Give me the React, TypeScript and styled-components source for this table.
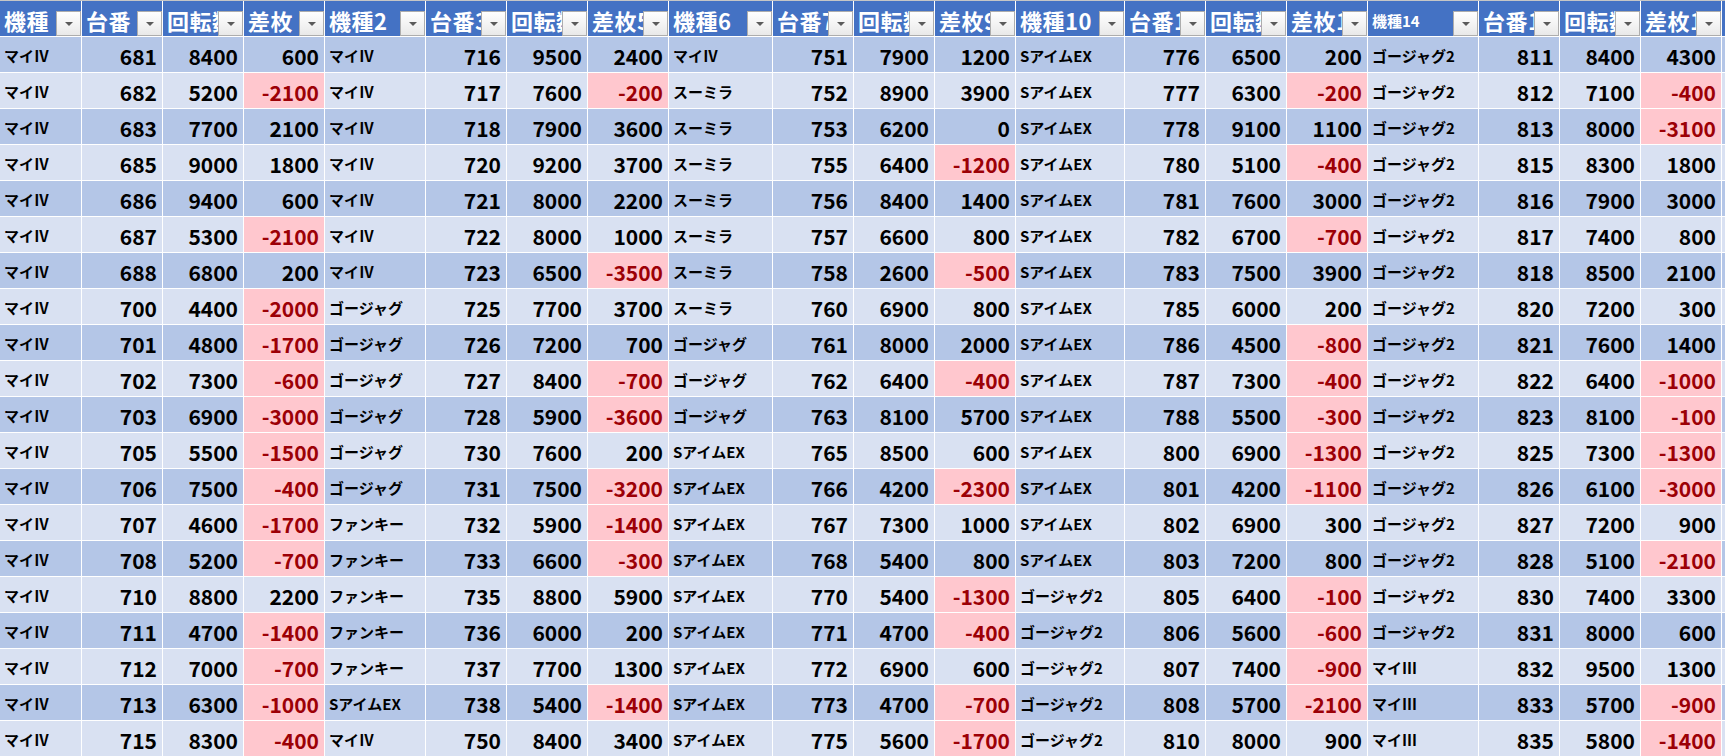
import styled, { createGlobalStyle } from 'styled-components'

// 列幅（Excel の列幅をピクセルで）
const COLS =
  '81px 80px 80px 80px 100px 80px 80px 80px 103px 80px 80px 80px 108px 80px 80px 80px 110px 80px 80px 80px 80px'

const GlobalStyle = createGlobalStyle`
  html, body {
    margin: 0;
    padding: 0;
    background: #ffffff;
  }
  body {
    font-family: 'Noto Sans CJK JP', 'Noto Sans', sans-serif;
  }
`

const Sheet = styled.div`
  width: 1725px;
  height: 756px;
  overflow: hidden;
  background: #ffffff;
  border-top: 1px solid #c6c6c6;
  box-sizing: border-box;
`

const Row = styled.div<{ $header?: boolean }>`
  display: grid;
  grid-template-columns: ${COLS};
  column-gap: 1px;
  height: ${props => (props.$header ? '35px' : '35px')};
  margin-bottom: 1px;
  width: max-content;
`

const HeaderCell = styled.div<{ $small?: boolean }>`
  position: relative;
  overflow: hidden;
  display: flex;
  align-items: center;
  padding: 3px 0 0 4px;
  box-sizing: border-box;
  background: #4472c4;
  color: #ffffff;
  font-size: ${props => (props.$small ? '15px' : '22px')};
  font-weight: 700;
  white-space: nowrap;
  letter-spacing: ${props => (props.$small ? '0' : '0.5px')};
`

const FilterButton = styled.span`
  position: absolute;
  right: 0;
  bottom: 0;
  width: 25px;
  height: 25px;
  box-sizing: border-box;
  border: 1px solid #adadad;
  background: linear-gradient(#ffffff, #e9e9e9);
  display: flex;
  align-items: center;
  justify-content: center;
  &::after {
    content: '';
    border-left: 4px solid transparent;
    border-right: 4px solid transparent;
    border-top: 4px solid #5a5a5a;
  }
`

const Cell = styled.div<{ $dark: boolean; $num?: boolean; $neg?: boolean }>`
  display: flex;
  align-items: center;
  justify-content: ${props => (props.$num ? 'flex-end' : 'flex-start')};
  padding: ${props => (props.$num ? '2px 5px 0 0' : '1px 0 0 4px')};
  box-sizing: border-box;
  overflow: hidden;
  white-space: nowrap;
  background: ${props =>
    props.$neg ? '#ffc7ce' : props.$dark ? '#b4c6e7' : '#d9e1f2'};
  color: ${props => (props.$neg ? '#9c0006' : '#000000')};
  font-size: ${props => (props.$num ? '21px' : '15px')};
  font-weight: 700;
`

const headers = [
  '機種', '台番', '回転数', '差枚',
  '機種2', '台番3', '回転数4', '差枚5',
  '機種6', '台番7', '回転数8', '差枚9',
  '機種10', '台番11', '回転数12', '差枚13',
  '機種14', '台番15', '回転数16', '差枚17',
  '機種18'
]

type Group = [string, number, number, number]

const M4 = 'マイⅣ'
const M3 = 'マイⅢ'
const GJ = 'ゴージャグ'
const GJ2 = 'ゴージャグ2'
const SM = 'スーミラ'
const SA = 'SアイムEX'
const FK = 'ファンキー'

const rows: Group[][] = [
  [[M4, 681, 8400, 600], [M4, 716, 9500, 2400], [M4, 751, 7900, 1200], [SA, 776, 6500, 200], [GJ2, 811, 8400, 4300]],
  [[M4, 682, 5200, -2100], [M4, 717, 7600, -200], [SM, 752, 8900, 3900], [SA, 777, 6300, -200], [GJ2, 812, 7100, -400]],
  [[M4, 683, 7700, 2100], [M4, 718, 7900, 3600], [SM, 753, 6200, 0], [SA, 778, 9100, 1100], [GJ2, 813, 8000, -3100]],
  [[M4, 685, 9000, 1800], [M4, 720, 9200, 3700], [SM, 755, 6400, -1200], [SA, 780, 5100, -400], [GJ2, 815, 8300, 1800]],
  [[M4, 686, 9400, 600], [M4, 721, 8000, 2200], [SM, 756, 8400, 1400], [SA, 781, 7600, 3000], [GJ2, 816, 7900, 3000]],
  [[M4, 687, 5300, -2100], [M4, 722, 8000, 1000], [SM, 757, 6600, 800], [SA, 782, 6700, -700], [GJ2, 817, 7400, 800]],
  [[M4, 688, 6800, 200], [M4, 723, 6500, -3500], [SM, 758, 2600, -500], [SA, 783, 7500, 3900], [GJ2, 818, 8500, 2100]],
  [[M4, 700, 4400, -2000], [GJ, 725, 7700, 3700], [SM, 760, 6900, 800], [SA, 785, 6000, 200], [GJ2, 820, 7200, 300]],
  [[M4, 701, 4800, -1700], [GJ, 726, 7200, 700], [GJ, 761, 8000, 2000], [SA, 786, 4500, -800], [GJ2, 821, 7600, 1400]],
  [[M4, 702, 7300, -600], [GJ, 727, 8400, -700], [GJ, 762, 6400, -400], [SA, 787, 7300, -400], [GJ2, 822, 6400, -1000]],
  [[M4, 703, 6900, -3000], [GJ, 728, 5900, -3600], [GJ, 763, 8100, 5700], [SA, 788, 5500, -300], [GJ2, 823, 8100, -100]],
  [[M4, 705, 5500, -1500], [GJ, 730, 7600, 200], [SA, 765, 8500, 600], [SA, 800, 6900, -1300], [GJ2, 825, 7300, -1300]],
  [[M4, 706, 7500, -400], [GJ, 731, 7500, -3200], [SA, 766, 4200, -2300], [SA, 801, 4200, -1100], [GJ2, 826, 6100, -3000]],
  [[M4, 707, 4600, -1700], [FK, 732, 5900, -1400], [SA, 767, 7300, 1000], [SA, 802, 6900, 300], [GJ2, 827, 7200, 900]],
  [[M4, 708, 5200, -700], [FK, 733, 6600, -300], [SA, 768, 5400, 800], [SA, 803, 7200, 800], [GJ2, 828, 5100, -2100]],
  [[M4, 710, 8800, 2200], [FK, 735, 8800, 5900], [SA, 770, 5400, -1300], [GJ2, 805, 6400, -100], [GJ2, 830, 7400, 3300]],
  [[M4, 711, 4700, -1400], [FK, 736, 6000, 200], [SA, 771, 4700, -400], [GJ2, 806, 5600, -600], [GJ2, 831, 8000, 600]],
  [[M4, 712, 7000, -700], [FK, 737, 7700, 1300], [SA, 772, 6900, 600], [GJ2, 807, 7400, -900], [M3, 832, 9500, 1300]],
  [[M4, 713, 6300, -1000], [SA, 738, 5400, -1400], [SA, 773, 4700, -700], [GJ2, 808, 5700, -2100], [M3, 833, 5700, -900]],
  [[M4, 715, 8300, -400], [M4, 750, 8400, 3400], [SA, 775, 5600, -1700], [GJ2, 810, 8000, 900], [M3, 835, 5800, -1400]]
]

const App = () => {
  return (
    <>
      <GlobalStyle />
      <Sheet>
        <Row $header>
          {headers.map(h => (
            <HeaderCell key={h} $small={h === '機種14'}>
              {h}
              <FilterButton />
            </HeaderCell>
          ))}
        </Row>
        {rows.map((groups, i) => {
          // 縞模様：奇数行が濃い色
          const dark = i % 2 === 0
          return (
            <Row key={i}>
              {groups.map(([name, no, spins, diff], g) => [
                <Cell key={`${g}-n`} $dark={dark}>{name}</Cell>,
                <Cell key={`${g}-a`} $dark={dark} $num>{no}</Cell>,
                <Cell key={`${g}-b`} $dark={dark} $num>{spins}</Cell>,
                <Cell key={`${g}-c`} $dark={dark} $num $neg={diff < 0}>
                  {diff}
                </Cell>
              ])}
              <Cell $dark={dark} />
            </Row>
          )
        })}
      </Sheet>
    </>
  )
}

export default App
